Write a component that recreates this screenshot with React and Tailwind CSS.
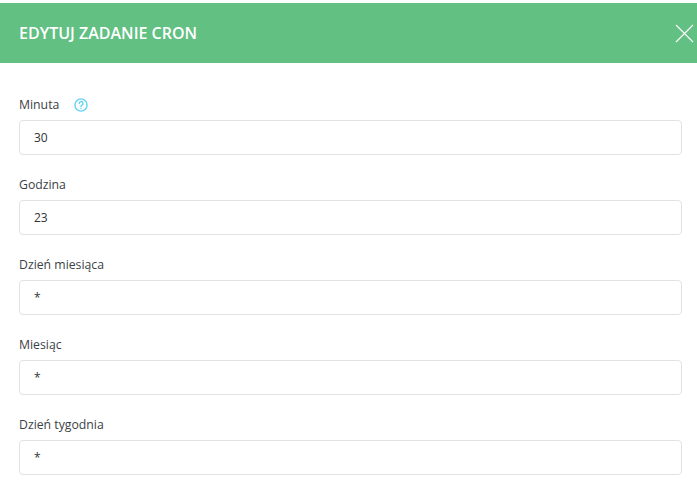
import React from 'react';

const FIELDS = [
    { label: 'Minuta', value: '30', help: true },
    { label: 'Godzina', value: '23' },
    { label: 'Dzień miesiąca', value: '*' },
    { label: 'Miesiąc', value: '*' },
    { label: 'Dzień tygodnia', value: '*' },
];

const HelpIcon = () => (
    <svg className="ml-[15px] h-[14px] w-[14px] text-[#63d2f7]" viewBox="0 0 14 14" fill="none" stroke="currentColor" strokeWidth="1.4" strokeLinecap="round">
        <circle cx="7" cy="7" r="6.1" />
        <path d="M5.2 5.5a1.9 1.9 0 1 1 2.7 1.7c-.6.3-.9.7-.9 1.3" />
        <path d="M7 10.4v.2" />
    </svg>
);

const Field = ({ label, value, help }) => (
    <div className="mb-[20px]">
        <div className="flex h-[20px] items-center text-[12.25px] font-medium text-[#3b3f45]">
            {label}
            {help && <HelpIcon />}
        </div>
        <input
            readOnly
            value={value}
            className="mt-[5px] block h-[35px] w-full rounded-[4px] border border-[#e2e2e2] bg-white px-[14px] text-[12px] text-[#333] outline-none"
        />
    </div>
);

export default function App() {
    return (
        <div className="h-[483px] w-[697px] overflow-hidden bg-white font-['Open_Sans',sans-serif]">
            <div className="h-[3px] bg-white" />
            <header className="flex h-[60px] items-center justify-between bg-[#61c082] pl-[19px] pr-[3px]">
                <h1 className="text-[16px] font-semibold text-white">EDYTUJ ZADANIE CRON</h1>
                <svg className="h-[19px] w-[19px] text-white" viewBox="0 0 19 19" fill="none" stroke="currentColor" strokeWidth="1.1">
                    <path d="M1 1l17 17M18 1L1 18" />
                </svg>
            </header>
            <main className="pl-[19px] pr-[15px] pt-[32px]">
                {FIELDS.map((f) => (
                    <Field key={f.label} {...f} />
                ))}
            </main>
        </div>
    );
}
